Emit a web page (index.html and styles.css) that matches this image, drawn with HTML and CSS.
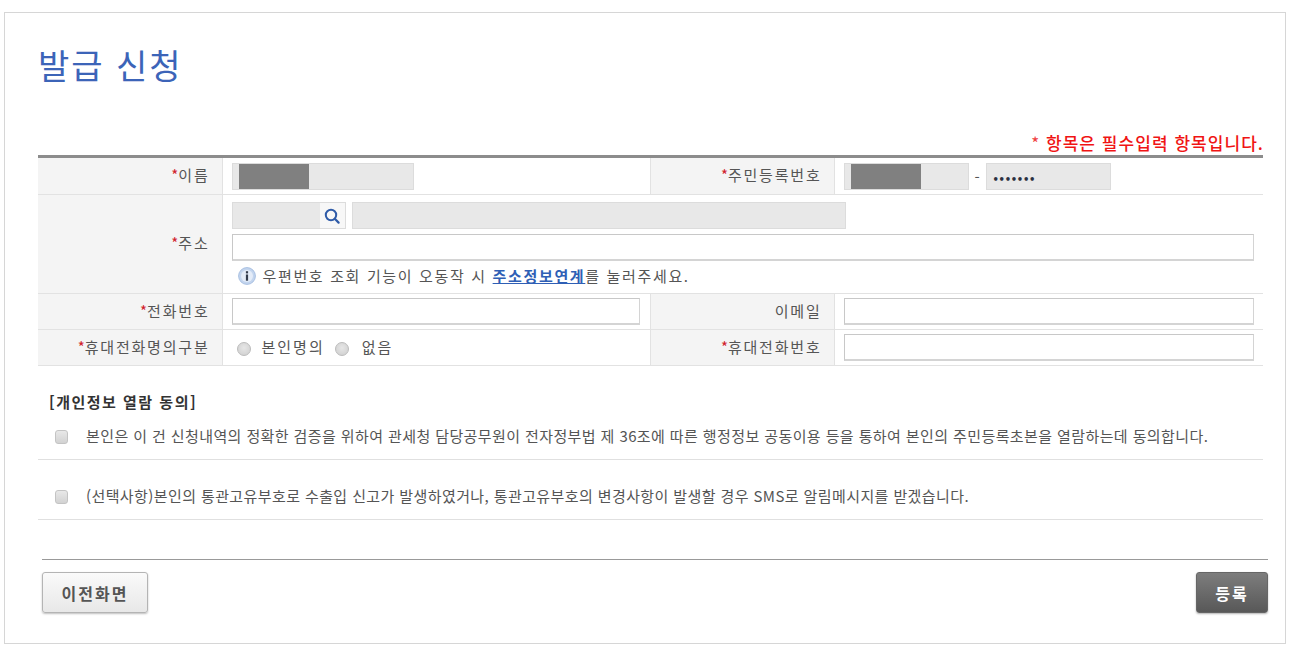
FILE: index.html
```html
<!DOCTYPE html>
<html lang="ko">
<head>
<meta charset="UTF-8" />
<title>발급 신청</title>
<link rel="stylesheet" href="styles.css">
</head>
<body>
  <div class="card">
    <h1 class="title">발급 신청</h1>
    <p class="required-note"><span class="note-star">*</span> 항목은 필수입력 항목입니다.</p>

    <table class="form-table">
      <colgroup>
        <col class="col-label"><col class="col-value"><col class="col-label"><col class="col-value">
      </colgroup>
      <tr class="row-first">
        <th><span class="star">*</span>이름</th>
        <td>
          <div class="input readonly w-name"><span class="redact"></span></div>
        </td>
        <th><span class="star">*</span>주민등록번호</th>
        <td>
          <div class="rrn">
            <div class="input readonly w-rrn"><span class="redact"></span></div>
            <span class="dash">-</span>
            <div class="input readonly w-rrn dots">•••••••</div>
          </div>
        </td>
      </tr>
      <tr>
        <th><span class="star">*</span>주소</th>
        <td colspan="3" class="address">
          <div class="zip-row">
            <div class="input readonly zip">
              <button class="search" type="button" aria-label="검색">
                <svg width="16" height="16" viewBox="0 0 16 16"><circle cx="7" cy="7" r="5.2" fill="none" stroke="#2f5ba8" stroke-width="2"/><path d="M10.8 10.8 14.6 14.6" stroke="#2f5ba8" stroke-width="2.2" stroke-linecap="round"/></svg>
              </button>
            </div>
            <div class="input readonly w-addr"></div>
          </div>
          <input class="input full" type="text">
          <div class="help">
            <svg class="info" width="18" height="18" viewBox="0 0 18 18"><circle cx="9" cy="9" r="8.4" fill="#c3d5ee" stroke="#a9c0e2" stroke-width="1"/><circle cx="9" cy="9" r="6" fill="#e4ecf8"/><rect x="7.9" y="4.2" width="2.2" height="2.2" fill="#333c4d"/><rect x="7.9" y="7.5" width="2.2" height="6.2" fill="#333c4d"/></svg>
            <span>우편번호 조회 기능이 오동작 시 <a href="#" class="link">주소정보연계</a>를 눌러주세요.</span>
          </div>
        </td>
      </tr>
      <tr>
        <th><span class="star">*</span>전화번호</th>
        <td class="cell-narrow"><input class="input full" type="text"></td>
        <th>이메일</th>
        <td><input class="input full" type="text"></td>
      </tr>
      <tr>
        <th><span class="star">*</span>휴대전화명의구분</th>
        <td>
          <div class="radios">
            <span class="radio"></span><span class="radio-text">본인명의</span>
            <span class="radio"></span><span class="radio-text">없음</span>
          </div>
        </td>
        <th><span class="star">*</span>휴대전화번호</th>
        <td><input class="input full" type="text"></td>
      </tr>
    </table>

    <h2 class="agree-title">[개인정보 열람 동의]</h2>
    <div class="agree-row">
      <span class="check"></span>
      <span class="agree-text">본인은 이 건 신청내역의 정확한 검증을 위하여 관세청 담당공무원이 전자정부법 제 36조에 따른 행정정보 공동이용 등을 통하여 본인의 주민등록초본을 열람하는데 동의합니다.</span>
    </div>
    <div class="agree-row">
      <span class="check"></span>
      <span class="agree-text">(선택사항)본인의 통관고유부호로 수출입 신고가 발생하였거나, 통관고유부호의 변경사항이 발생할 경우 SMS로 알림메시지를 받겠습니다.</span>
    </div>

    <div class="actions">
      <button class="btn btn-prev" type="button">이전화면</button>
      <button class="btn btn-submit" type="button">등록</button>
    </div>
  </div>
</body>
</html>
```

FILE: styles.css
```css
:root {
  --color-border: #e2e2e2;
  --color-label: #f4f4f4;
  --color-text: #555;
}
* {
  box-sizing: border-box;
}
body {
  margin: 0;
  background: #fff;
  font-family: "Noto Sans CJK KR", "Noto Sans", sans-serif;
  color: var(--color-text);
  font-size: 15px;
}
.card {
  width: 1282px;
  height: 632px;
  margin: 12px 0 0 4px;
  border: 1px solid #d6d6d6;
  padding: 0 21px 0 33px;
}
.title {
  margin: 27px 0 0;
  font-size: 34px;
  line-height: 50px;
  font-weight: 400;
  color: #3c64b8;
  letter-spacing: 2px;
}
.required-note {
  margin: 43px 0 0;
  text-align: right;
  font-size: 17px;
  line-height: 20px;
  font-weight: 500;
  color: #f01414;
  letter-spacing: 1.05px;
}
.note-star {
  font-weight: 400;
  color: #f04040;
}
.form-table {
  width: 1225px;
  margin-top: 2px;
  border-collapse: collapse;
  table-layout: fixed;
  border-top: 3px solid #8c8c8c;
}
.col-label { width: 184px; }
.form-table col:nth-child(2) { width: 428px; }
.form-table th, .form-table td {
  border-bottom: 1px solid var(--color-border);
  padding: 0 9px;
  height: 36px;
  font-size: 15px;
}
.form-table td.cell-narrow {
  padding-right: 10px;
}
.row-first th, .row-first td {
  height: 38px;
}
.form-table th {
  background: var(--color-label);
  border-left: 1px solid var(--color-border);
  border-right: 1px solid var(--color-border);
  text-align: right;
  font-weight: 400;
  letter-spacing: 1.8px;
  line-height: 20px;
  padding: 0 12px 2px 0;
}
.form-table th:first-child {
  border-left: 0;
}
.star {
  color: #d0202a;
  letter-spacing: 0;
}
.input {
  display: block;
  height: 27px;
  border-style: solid;
  border-width: 1px 1px 2px 1px;
  border-color: #c8c8c8 #d4d4d4 #d4d4d4 #c8c8c8;
  background: #fff;
  outline: none;
}
.full {
  width: 100%;
}
.readonly {
  background: #e8e8e8;
  border: 1px solid #dcdcdc;
}
.w-name { width: 182px; padding-left: 6px; }
.w-rrn { width: 125px; padding-left: 6px; }
.w-addr { width: 494px; }
.redact {
  display: block;
  width: 70px;
  height: 100%;
  background: #808080;
}
.rrn {
  display: flex;
  align-items: center;
}
.dash {
  width: 17px;
  text-align: center;
  letter-spacing: 0;
}
.dots {
  font-family: "DejaVu Sans", sans-serif;
  font-size: 10px;
  font-weight: 700;
  line-height: 31px;
  color: #2a3040;
  letter-spacing: -0.3px;
  overflow: hidden;
}
.form-table td.address {
  padding-top: 7px;
  padding-bottom: 7px;
}
.zip-row {
  display: flex;
  gap: 6px;
  margin-bottom: 5px;
}
.zip {
  position: relative;
  width: 114px;
}
.search {
  position: absolute;
  top: 0;
  right: 0;
  width: 25px;
  height: 25px;
  padding: 0;
  border: 0;
  background: #f7f7f7;
  display: flex;
  align-items: center;
  justify-content: center;
}
.help {
  display: flex;
  align-items: center;
  gap: 7px;
  margin-top: 4px;
  padding-left: 6px;
  height: 21px;
  letter-spacing: 1.65px;
}
.link {
  color: #2f5fb5;
  font-weight: 700;
  text-decoration: underline;
}
.radios {
  display: flex;
  align-items: center;
  padding-left: 5px;
  letter-spacing: 2px;
}
.radio {
  width: 14px;
  height: 14px;
  margin-top: 2px;
  border-radius: 50%;
  border: 1px solid #bdbdbd;
  background: radial-gradient(circle at 50% 40%, #e6e6e6, #cdcdcd);
}
.radio-text {
  margin: 0 10px 3px 11px;
}
.radio-text:last-child {
  margin-left: 13px;
}
.agree-title {
  margin: 26px 0 0 11px;
  font-size: 15px;
  line-height: 20px;
  font-weight: 700;
  color: #333;
  letter-spacing: 1.5px;
}
.agree-row {
  display: flex;
  align-items: flex-end;
  width: 1225px;
  height: 60px;
  border-bottom: 1px solid #e0e0e0;
  padding: 0 0 12px 17px;
  gap: 18px;
  font-size: 15px;
  line-height: 22px;
  letter-spacing: 0.4px;
  white-space: nowrap;
}
.agree-title + .agree-row {
  height: 48px;
}
.check {
  width: 13px;
  height: 14px;
  margin-bottom: 3px;
  border: 1px solid #c4c4c4;
  border-radius: 3px;
  background: linear-gradient(#e8e8e8, #d2d2d2);
  flex: none;
}
.actions {
  display: flex;
  justify-content: space-between;
  width: 1226px;
  margin: 39px 0 0 4px;
  padding-top: 12px;
  border-top: 1px solid #999;
}
.btn {
  height: 41px;
  border-radius: 3px;
  font-family: inherit;
  font-size: 16px;
  font-weight: 700;
  letter-spacing: 2px;
  cursor: pointer;
}
.btn-prev {
  width: 106px;
  color: #555;
  border: 1px solid #b4b4b4;
  background: linear-gradient(#fafafa, #e8e8e8);
  box-shadow: 0 1px 2px rgba(0, 0, 0, 0.25);
}
.btn-submit {
  width: 72px;
  color: #fff;
  border: 1px solid #666;
  background: linear-gradient(#7d7d7d, #585858);
  box-shadow: 0 1px 2px rgba(0, 0, 0, 0.3);
}
```
